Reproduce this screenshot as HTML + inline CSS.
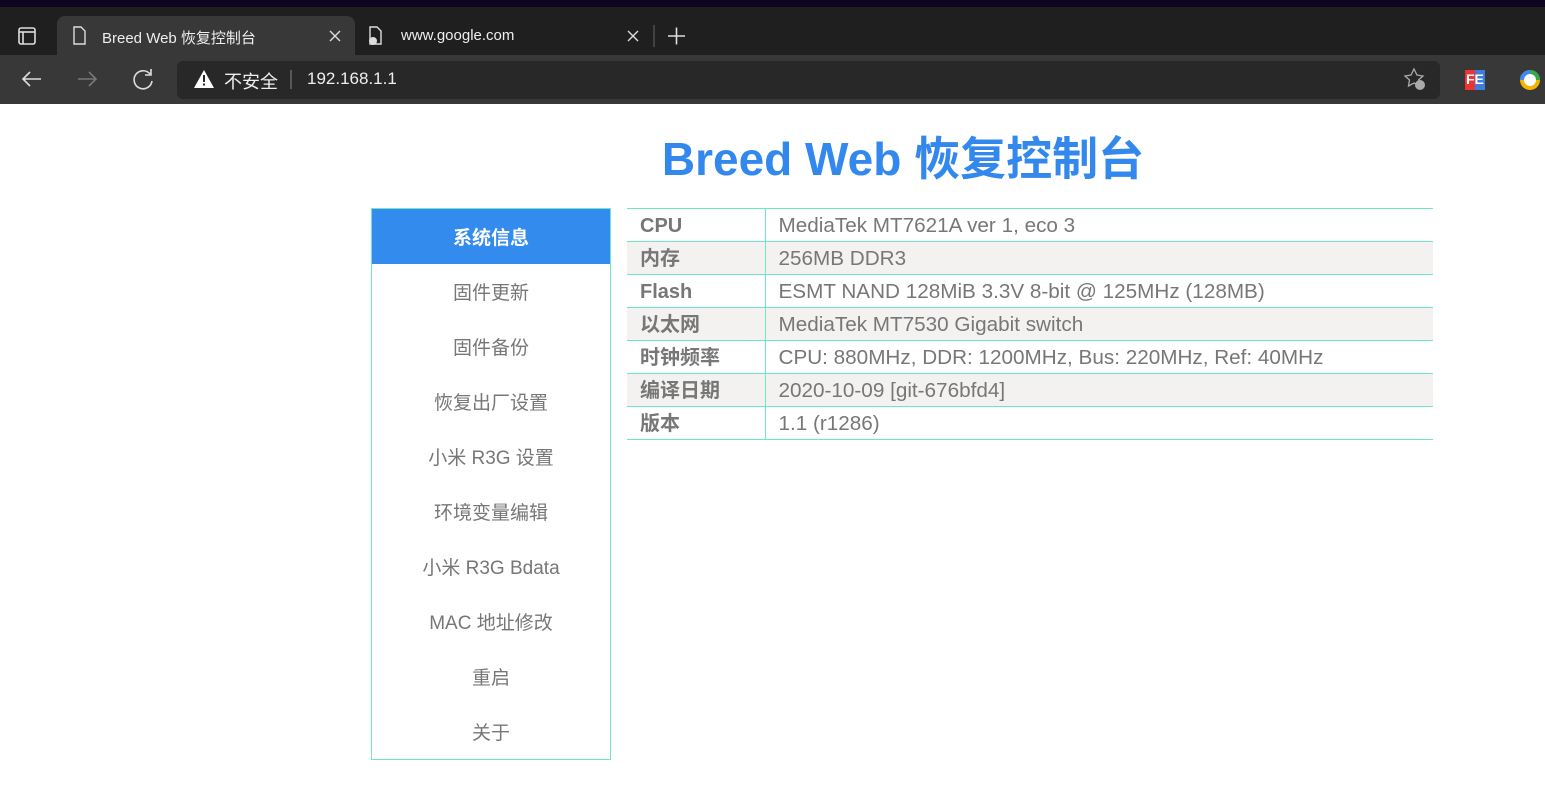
<!DOCTYPE html>
<html><head><meta charset="utf-8"><style>
*{margin:0;padding:0;box-sizing:border-box}
body{width:1545px;height:808px;background:#fff;font-family:"Liberation Sans","Noto Sans CJK SC",sans-serif;position:relative;overflow:hidden}
.abs{position:absolute}
#top{left:0;top:0;width:1545px;height:7px;background:#0e0620}
#tabs{left:0;top:7px;width:1545px;height:48px;background:#1f1f1f}
#tab1{left:57px;top:16px;width:298px;height:40px;background:#383838;border-radius:8px 8px 0 0}
#tool{left:0;top:55px;width:1545px;height:49px;background:#383838}
#addr{left:177px;top:61px;width:1263px;height:38px;background:#282828;border-radius:6px}
.tt{color:#eee;font-size:15px}
h1{position:absolute;left:0;width:1806px;text-align:center;top:129px;font-size:46px;color:#3388ee;font-weight:bold;line-height:60px}
#side{left:371px;top:208px;width:240px;height:552px;border:1px solid #6de8c6}
.it{height:55px;line-height:59px;text-align:center;font-size:19px;color:#777}
.it.a{background:#338bee;color:#fff;font-weight:bold}
table{position:absolute;left:627px;top:208px;width:806px;border-collapse:collapse;font-size:20.7px;color:#777}
td{height:33px;border-top:1px solid #6de8c6;border-bottom:1px solid #6de8c6;padding:2px 13px 0;line-height:30px}
td:first-child{width:138px;font-weight:bold;border-right:1px solid #6de8c6;font-size:20px}
tr:nth-child(even) td{background:#f3f2f0}
</style></head><body>
<div id="top" class="abs"></div>
<div id="tabs" class="abs"></div>
<div id="tab1" class="abs"></div>
<div id="tool" class="abs"></div>
<div id="addr" class="abs"></div>
<svg class="abs" style="left:0;top:0" width="1545" height="104">
<rect x="19" y="28" width="16" height="16" rx="2" fill="none" stroke="#ddd" stroke-width="1.6"/><line x1="19" y1="32" x2="35" y2="32" stroke="#ddd" stroke-width="1.6"/><line x1="23" y1="32" x2="23" y2="44" stroke="#ddd" stroke-width="1.6"/>
<path d="M74 27h7l4 4v13h-11z" fill="none" stroke="#ddd" stroke-width="1.4"/>
<path d="M330 31l10 10M340 31l-10 10" stroke="#ddd" stroke-width="1.4"/>
<path d="M370 27h7l4 4v13h-11z" fill="none" stroke="#ddd" stroke-width="1.4"/><circle cx="373" cy="41" r="4" fill="#ddd"/>
<path d="M628 31l10 10M638 31l-10 10" stroke="#ddd" stroke-width="1.4"/>
<line x1="654" y1="25" x2="654" y2="47" stroke="#666"/>
<path d="M668 36h17M676.5 27.5v17" stroke="#ddd" stroke-width="1.6"/>
<path d="M41 79h-18M30 72l-7 7 7 7" fill="none" stroke="#ddd" stroke-width="1.6"/>
<path d="M78 79h18M89 72l7 7-7 7" fill="none" stroke="#777" stroke-width="1.6"/>
<path d="M150 74a9 9 0 1 0 2 7M151 69v6h-6" fill="none" stroke="#ddd" stroke-width="1.6"/>
<path d="M204 70l10 18h-20z" fill="#fff"/><rect x="203" y="75" width="2" height="7" fill="#282828"/><rect x="203" y="83.5" width="2" height="2" fill="#282828"/>
<line x1="291" y1="70" x2="291" y2="89" stroke="#888"/>
<path d="M1414 69l3 6 6 1-4.5 4 1 6-5.5-3-5.5 3 1-6-4.5-4 6-1z" fill="none" stroke="#aaa" stroke-width="1.3"/><circle cx="1420" cy="85" r="5" fill="#aaa"/>
<rect x="1465" y="70" width="20" height="20" fill="#e33"/><rect x="1475" y="70" width="10" height="20" fill="#3b7de0"/>
<circle cx="1530" cy="80" r="10" fill="#f4b400"/><path d="M1530 70a10 10 0 0 1 10 10h-10z" fill="#34a853"/><path d="M1520 80a10 10 0 0 1 10-10v10z" fill="#4285f4"/><circle cx="1530" cy="80" r="6" fill="#fff"/>
</svg>
<div class="abs tt" style="left:102px;top:27px">Breed Web 恢复控制台</div>
<div class="abs tt" style="left:401px;top:27px">www.google.com</div>
<div class="abs" style="left:1466px;top:71px;color:#fff;font-weight:bold;font-size:14px">FE</div>
<div class="abs" style="left:224px;top:68px;color:#eee;font-size:18px">不安全</div>
<div class="abs" style="left:307px;top:69px;color:#eee;font-size:17px">192.168.1.1</div>
<h1>Breed Web 恢复控制台</h1>
<div id="side" class="abs">
<div class="it a">系统信息</div><div class="it">固件更新</div><div class="it">固件备份</div><div class="it">恢复出厂设置</div><div class="it">小米 R3G 设置</div><div class="it">环境变量编辑</div><div class="it">小米 R3G Bdata</div><div class="it">MAC 地址修改</div><div class="it">重启</div><div class="it">关于</div>
</div>
<table>
<tr><td>CPU</td><td>MediaTek MT7621A ver 1, eco 3</td></tr>
<tr><td>内存</td><td>256MB DDR3</td></tr>
<tr><td>Flash</td><td>ESMT NAND 128MiB 3.3V 8-bit @ 125MHz (128MB)</td></tr>
<tr><td>以太网</td><td>MediaTek MT7530 Gigabit switch</td></tr>
<tr><td>时钟频率</td><td>CPU: 880MHz, DDR: 1200MHz, Bus: 220MHz, Ref: 40MHz</td></tr>
<tr><td>编译日期</td><td>2020-10-09 [git-676bfd4]</td></tr>
<tr><td>版本</td><td>1.1 (r1286)</td></tr>
</table>
</body></html>
